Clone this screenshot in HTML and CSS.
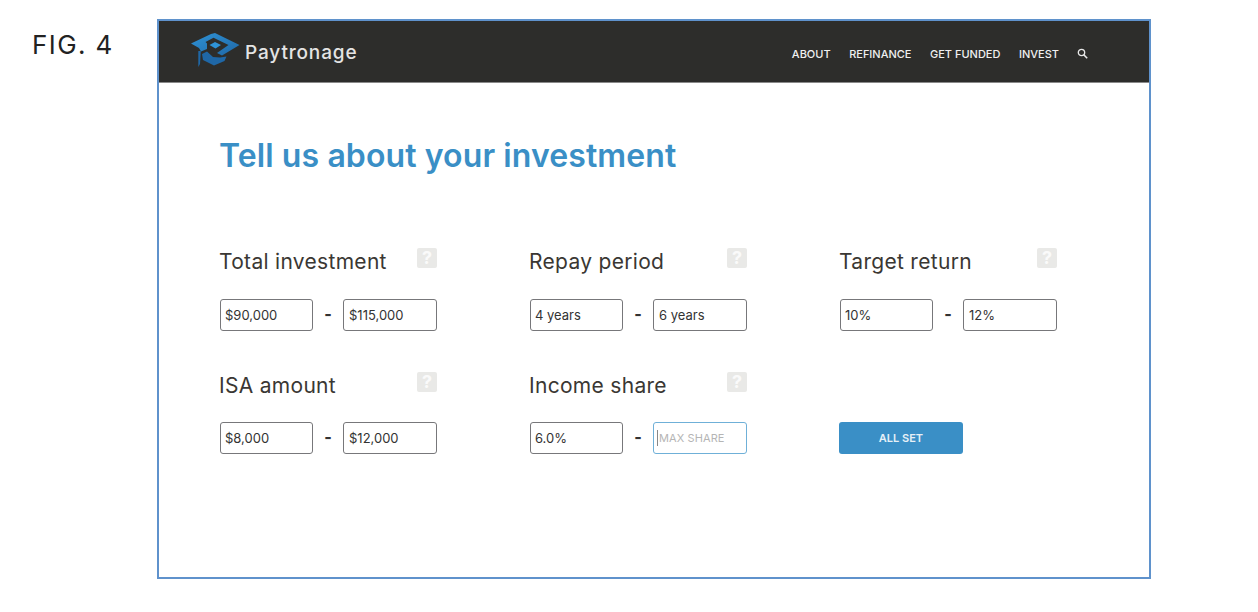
FILE: index.html
```html
<!DOCTYPE html>
<html lang="en">
<head>
<meta charset="utf-8">
<title>Paytronage</title>
<link rel="stylesheet" href="styles.css">
</head>
<body>
<div class="sheet">
  <div class="fig">FIG. 4</div>
  <div class="frame">
    <header class="topbar">
      <div class="brand">
        <svg class="logo" width="50" height="40" viewBox="0 0 50 40" aria-hidden="true">
          <defs>
            <linearGradient id="lg" x1="0" y1="0" x2="1" y2="1">
              <stop offset="0" stop-color="#2f93d6"/>
              <stop offset="1" stop-color="#1f67a6"/>
            </linearGradient>
          </defs>
          <path d="M1 13.500 L21 4 L25 3 L49.500 15 L32 25.500 L27 23 L38.500 15 L23.500 7.800 L15.500 12 L17 13.500 L17 19 L11 21.500 L9 18 Z" fill="url(#lg)"/>
          <path d="M19.500 15 L25 12 L31 15 L25.500 18.500 Z" fill="#2f93d6"/>
          <path d="M12 24 L17 21.500 L23 27 L30 27.500 L36.500 26.500 L34.500 31 L24 35.500 L13 30 Z" fill="#1f67a6"/>
          <path d="M8.300 21 L10.800 21 L10 34 L8.300 37 Z" fill="#1f67a6"/>
        </svg>
        <span class="brand-name">Paytronage</span>
      </div>
      <nav class="nav">
        <a>ABOUT</a>
        <a>REFINANCE</a>
        <a>GET FUNDED</a>
        <a>INVEST</a>
        <svg class="search" width="11" height="11" viewBox="0 0 11 11" aria-hidden="true">
          <circle cx="4.500" cy="4.500" r="3.200" fill="none" stroke="#e8e8e8" stroke-width="1.300"/>
          <path d="M7 7 L10.200 10.200" stroke="#e8e8e8" stroke-width="1.600"/>
        </svg>
      </nav>
    </header>
    <main class="content">
      <h1 class="title">Tell us about your investment</h1>
      <div class="grid">
        <section class="field">
          <div class="label-row"><span class="label">Total investment</span><span class="help">?</span></div>
          <div class="inputs"><div class="box">$90,000</div><span class="dash">-</span><div class="box">$115,000</div></div>
        </section>
        <section class="field">
          <div class="label-row"><span class="label">Repay period</span><span class="help">?</span></div>
          <div class="inputs"><div class="box">4 years</div><span class="dash">-</span><div class="box">6 years</div></div>
        </section>
        <section class="field">
          <div class="label-row"><span class="label">Target return</span><span class="help">?</span></div>
          <div class="inputs"><div class="box">10%</div><span class="dash">-</span><div class="box">12%</div></div>
        </section>
        <section class="field">
          <div class="label-row"><span class="label">ISA amount</span><span class="help">?</span></div>
          <div class="inputs"><div class="box">$8,000</div><span class="dash">-</span><div class="box">$12,000</div></div>
        </section>
        <section class="field">
          <div class="label-row"><span class="label">Income share</span><span class="help">?</span></div>
          <div class="inputs"><div class="box">6.0%</div><span class="dash">-</span><div class="box focus"><i class="caret"></i>MAX SHARE</div></div>
        </section>
        <section class="field">
          <div class="label-row label-empty"></div>
          <div class="inputs"><button class="submit">ALL SET</button></div>
        </section>
      </div>
    </main>
  </div>
</div>
</body>
</html>
```

FILE: styles.css
```css
* { box-sizing: border-box; }
html, body { margin: 0; padding: 0; background: #fff; }
body {
  font-family: Inter, "Liberation Sans", sans-serif;
  color: #333;
  height: 612px;
  overflow: hidden;
}
.sheet {
  display: flex;
  padding: 19px 0 0 32px;
}
.fig {
  width: 125px;
  flex: none;
  padding-top: 12px;
  font-size: 26px;
  line-height: 28px;
  letter-spacing: 1.400px;
  font-weight: 400;
  color: #222;
}
.frame {
  width: 994px;
  height: 560px;
  border: 2px solid #5f92cc;
  background: #fff;
}
.topbar {
  height: 62px;
  background: #2d2d2b;
  border-bottom: 1px solid #8a8a8a;
  display: flex;
  align-items: center;
  justify-content: space-between;
  padding: 0 61px 0 31px;
}
.brand { display: flex; align-items: center; gap: 5px; margin-top: -3px; }
.logo { display: block; }
.brand-name {
  font-size: 19px;
  font-weight: 500;
  letter-spacing: 0.85px;
  color: #e4e4e4;
  margin-top: 4px;
}
.nav {
  display: flex;
  align-items: center;
  gap: 18.500px;
  font-size: 11px;
  font-weight: 500;
  color: #f0f0f0;
  margin-top: 4px;
}
.nav a { white-space: nowrap; }
.search { margin-top: 0; margin-left: -0.500px; }
.content { padding: 0 0 0 61px; }
.title {
  margin: 53px 0 0 -1px;
  font-size: 32px;
  line-height: 40px;
  font-weight: 600;
  letter-spacing: 0.1px;
  color: #3a8fc6;
}
.grid {
  display: grid;
  grid-template-columns: repeat(3, 217px);
  column-gap: 93px;
  row-gap: 38px;
  margin-top: 70px;
}
.label-row {
  height: 36px;
  display: flex;
  justify-content: space-between;
  align-items: flex-start;
  padding-top: 2px;
}
.label {
  font-size: 21px;
  line-height: 28px;
  letter-spacing: 0.3px;
  color: #3a3733;
  font-weight: 400;
  margin-left: -1px;
}
.help {
  width: 20px;
  height: 20px;
  background: #e9e9e7;
  border-radius: 2px;
  color: #fafafa;
  font-size: 18px;
  line-height: 20px;
  font-weight: 700;
  text-align: center;
}
.field:nth-child(n+4) .help,
.field:nth-child(n+4) .label { margin-top: 1px; }
.inputs {
  display: flex;
  align-items: center;
  margin-top: 17px;
  height: 32px;
}
.box {
  width: 94px;
  height: 32px;
  border: 1px solid #77777a;
  border-radius: 3px;
  padding-left: 5px;
  font-size: 13px;
  line-height: 30px;
  color: #333;
  white-space: nowrap;
  display: flex;
  align-items: center;
}
.box:first-child { width: 93px; padding-left: 4px; }
.box.focus {
  border-color: #6fb0d8;
  color: #b5b5b5;
  font-size: 11px;
  letter-spacing: 0.1px;
  padding-left: 3px;
}
.caret {
  width: 1px;
  height: 16px;
  background: #888;
  margin-right: 1px;
}
.dash {
  width: 30px;
  text-align: center;
  font-size: 16px;
  font-weight: 800;
  color: #333;
  margin-top: -3px;
}
.submit {
  width: 124px;
  height: 32px;
  margin-left: -1px;
  border: 0;
  border-radius: 3px;
  background: #3a8fc6;
  color: #e6f0f7;
  font: 600 11px Inter, "Liberation Sans", sans-serif;
  padding: 0;
}
```
